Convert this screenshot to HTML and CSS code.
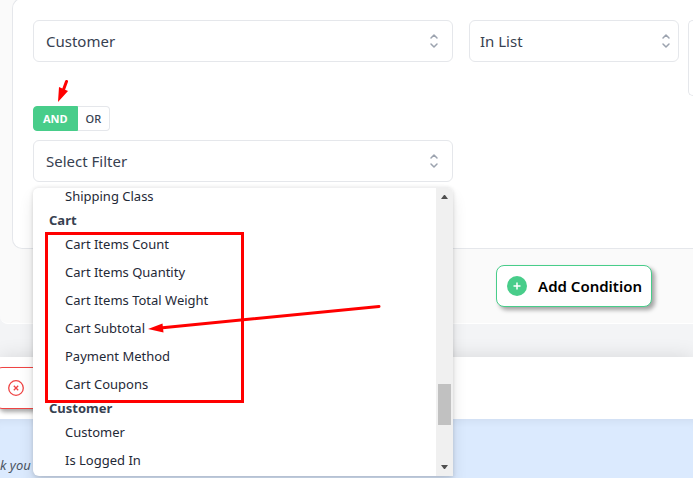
FILE: index.html
```
<!DOCTYPE html>
<html lang="en">
<head>
<meta charset="UTF-8">
<meta name="viewport" content="width=device-width, initial-scale=1.0">
<title>Conditions</title>
<link rel="stylesheet" href="styles.css">
</head>
<body>

<main class="panel">
    <section class="card">
        <div class="row">
            <div class="fields">
                <div class="select-wrap">
                    <select class="select" aria-label="Filter">
                        <option>Customer</option>
                    </select>
                    <svg class="chevrons" viewBox="0 0 20 20"><path d="M7 7l3-3 3 3m0 6l-3 3-3-3"/></svg>
                </div>
                <div class="select-wrap narrow">
                    <select class="select" aria-label="Comparison">
                        <option>In List</option>
                    </select>
                    <svg class="chevrons" viewBox="0 0 20 20"><path d="M7 7l3-3 3 3m0 6l-3 3-3-3"/></svg>
                </div>
            </div>
            <div class="value-box"></div>
        </div>

        <div class="toggle">
            <button type="button" class="toggle-btn active">AND</button>
            <button type="button" class="toggle-btn">OR</button>
        </div>

        <div class="row">
            <div class="fields">
                <div class="select-wrap">
                    <select class="select" aria-label="New filter">
                        <option>Select Filter</option>
                    </select>
                    <svg class="chevrons" viewBox="0 0 20 20"><path d="M7 7l3-3 3 3m0 6l-3 3-3-3"/></svg>

                    <div class="dropdown">
                        <ul class="options" role="listbox" aria-label="Filters">
                            <li class="option" role="option">Shipping Class</li>
                            <li class="group">Cart</li>
                            <li class="option" role="option">Cart Items Count</li>
                            <li class="option" role="option">Cart Items Quantity</li>
                            <li class="option" role="option">Cart Items Total Weight</li>
                            <li class="option" role="option">Cart Subtotal</li>
                            <li class="option" role="option">Payment Method</li>
                            <li class="option" role="option">Cart Coupons</li>
                            <li class="group">Customer</li>
                            <li class="option" role="option">Customer</li>
                            <li class="option" role="option">Is Logged In</li>
                        </ul>
                        <div class="scrollbar">
                            <svg class="scroll-arrow" viewBox="0 0 7 4"><path d="M3 0h1l3 4H0z"/></svg>
                            <div class="scroll-track"><div class="scroll-thumb"></div></div>
                            <svg class="scroll-arrow" viewBox="0 0 7 4"><path d="M0 0h7L4 4H3z"/></svg>
                        </div>
                    </div>
                </div>
            </div>
            <div class="value-space"></div>
        </div>
    </section>

    <div class="actions">
        <button type="button" class="add-btn">
            <svg class="add-icon" viewBox="0 0 20 20"><circle cx="10" cy="10" r="10"/><path d="M10 6.500v7M6.500 10h7"/></svg>
            Add Condition
        </button>
    </div>
</main>

<div class="footer-bar">
    <button type="button" class="cancel-btn" aria-label="Cancel">
        <svg class="cancel-icon" viewBox="0 0 16 16"><circle cx="8" cy="8" r="7.300"/><path d="M5.800 5.800l4.400 4.400M10.200 5.800l-4.400 4.400"/></svg>
    </button>
</div>

<footer class="notice"><p>k you</p></footer>

<!-- markers over the list -->
<svg class="marks" width="400" height="420" viewBox="0 0 400 420" aria-hidden="true">
    <rect x="46.500" y="233.500" width="196" height="168"/>
    <path d="M66.500 81.500L63 91M379 306.500L160 328"/>
    <path class="head" d="M58 102L59 87L68 91zM148 329L162.500 323.500L163.500 332.500z"/>
</svg>

</body>
</html>
```

FILE: styles.css
```
* {
    box-sizing: border-box;
}

body {
    margin: 0;
    min-height: 100vh;
    display: flex;
    flex-direction: column;
    overflow: hidden;
    background: #f3f4f6;
    color: #374151;
    font-family: "Noto Sans", "Open Sans", sans-serif;
    font-size: 15px;
}

button, select {
    font-family: inherit;
    cursor: pointer;
}

.panel {
    background: #fafafa;
    border-bottom: 1px solid #fff;
    border-bottom-left-radius: 8px;
    padding-left: 12px;
}

.card {
    margin-top: -2px;
    padding: 21px 0 66px 20px;
    background: #fff;
    border: 1px solid #e5e7eb;
    border-right: none;
    border-radius: 10px 0 0 10px;
}

.row {
    display: flex;
    align-items: flex-start;
    gap: 9px;
}

.fields {
    flex: 1;
    display: grid;
    grid-template-columns: 2fr 1fr;
    gap: 16px;
}

.select-wrap {
    position: relative;
}

.select {
    display: block;
    width: 100%;
    height: 42px;
    padding: 0 36px 0 12px;
    appearance: none;
    background: #fff;
    border: 1px solid #e5e7eb;
    border-radius: 6px;
    color: #374151;
    font-size: 15px;
}

.narrow .select {
    padding-left: 10px;
}

.chevrons {
    position: absolute;
    top: 11px;
    right: 9px;
    width: 20px;
    height: 20px;
    fill: none;
    stroke: #9ca3af;
    stroke-width: 1.5;
    stroke-linecap: round;
    stroke-linejoin: round;
    pointer-events: none;
}

.narrow .chevrons {
    right: 3px;
}

.value-box {
    width: 5px;
    height: 76px;
    border: 1px solid #e5e7eb;
    border-right: none;
    border-radius: 6px 0 0 6px;
}

.value-space {
    width: 5px;
}

.toggle {
    display: flex;
    margin: 10px 0 9px;
}

.toggle-btn {
    height: 25px;
    padding: 0 8px;
    background: #fff;
    border: 1px solid #e5e7eb;
    border-left: none;
    border-radius: 0 4px 4px 0;
    color: #374151;
    font-size: 11px;
    font-weight: 500;
}

.toggle-btn.active {
    padding: 0 9px;
    background: #48cd8a;
    border: 1px solid #48cd8a;
    border-radius: 4px 0 0 4px;
    color: #fff;
    font-weight: 700;
}

.dropdown {
    position: absolute;
    top: 47px;
    left: 0;
    z-index: 2;
    width: 100%;
    height: 289px;
    display: flex;
    overflow: hidden;
    background: #fff;
    border-top: 1px solid #f0f0f1;
    border-radius: 6px 6px 0 6px;
    box-shadow: 0 10px 15px rgba(0,0,0,0.1), 0 1px 4px rgba(0,0,0,0.15);
}

.options {
    flex: 1;
    list-style: none;
    margin: -6px 0 0;
    padding: 0;
    font-size: 13px;
    line-height: 20px;
}

.option {
    padding: 4px 32px;
    color: #1f2937;
}

.group {
    padding: 0 16px;
    font-weight: 700;
}

.scrollbar {
    width: 17px;
    padding: 7px 2px;
    display: flex;
    flex-direction: column;
    align-items: center;
    background: #f0f0f0;
}

.scroll-arrow {
    width: 7px;
    height: 4px;
    fill: #505050;
}

.scroll-track {
    flex: 1;
    width: 100%;
    display: flex;
    align-items: flex-end;
    padding-bottom: 40px;
}

.scroll-thumb {
    width: 100%;
    height: 41px;
    background: #c1c1c1;
}

.actions {
    display: flex;
    justify-content: flex-end;
    padding: 16px 41px 16px 0;
}

.add-btn {
    height: 42px;
    padding: 0 9px 0 10px;
    display: flex;
    align-items: center;
    gap: 11px;
    background: #fff;
    border: 1px solid #48cd8a;
    border-radius: 8px;
    box-shadow: 3px 3px 4px rgba(0,0,0,0.35);
    color: #000;
    font-size: 15px;
    font-weight: 600;
}

.add-icon {
    width: 20px;
    height: 20px;
    fill: #48cd8a;
}

.add-icon path {
    stroke: #fff;
    stroke-width: 1.5;
}

.footer-bar {
    margin-top: 33px;
    padding: 10px 0;
    background: #fff;
    box-shadow: 0 0 20px rgba(0,0,0,0.12);
}

.cancel-btn {
    display: flex;
    align-items: center;
    width: 96px;
    height: 42px;
    margin-left: -4px;
    padding: 0 11px;
    background: #fff;
    border: 1px solid #ef4444;
    border-radius: 6px;
    box-shadow: 3px 3px 4px rgba(0,0,0,0.35);
}

.cancel-icon {
    width: 16px;
    height: 16px;
    fill: none;
    stroke: #ef4444;
    stroke-width: 1.3;
}

.notice {
    flex: 1;
    padding-top: 36px;
    background: #dbeafe;
    box-shadow: inset 0 8px 8px -6px rgba(0,0,0,0.06);
    color: #4b5563;
    font-size: 13px;
    font-style: italic;
    line-height: 20px;
}

.notice p {
    margin: 0;
}

.marks {
    position: absolute;
    top: 0;
    left: 0;
    z-index: 3;
    fill: none;
    stroke: #f00;
    stroke-width: 3;
    stroke-linecap: round;
    pointer-events: none;
}

.marks .head {
    fill: #f00;
    stroke: none;
}
```
